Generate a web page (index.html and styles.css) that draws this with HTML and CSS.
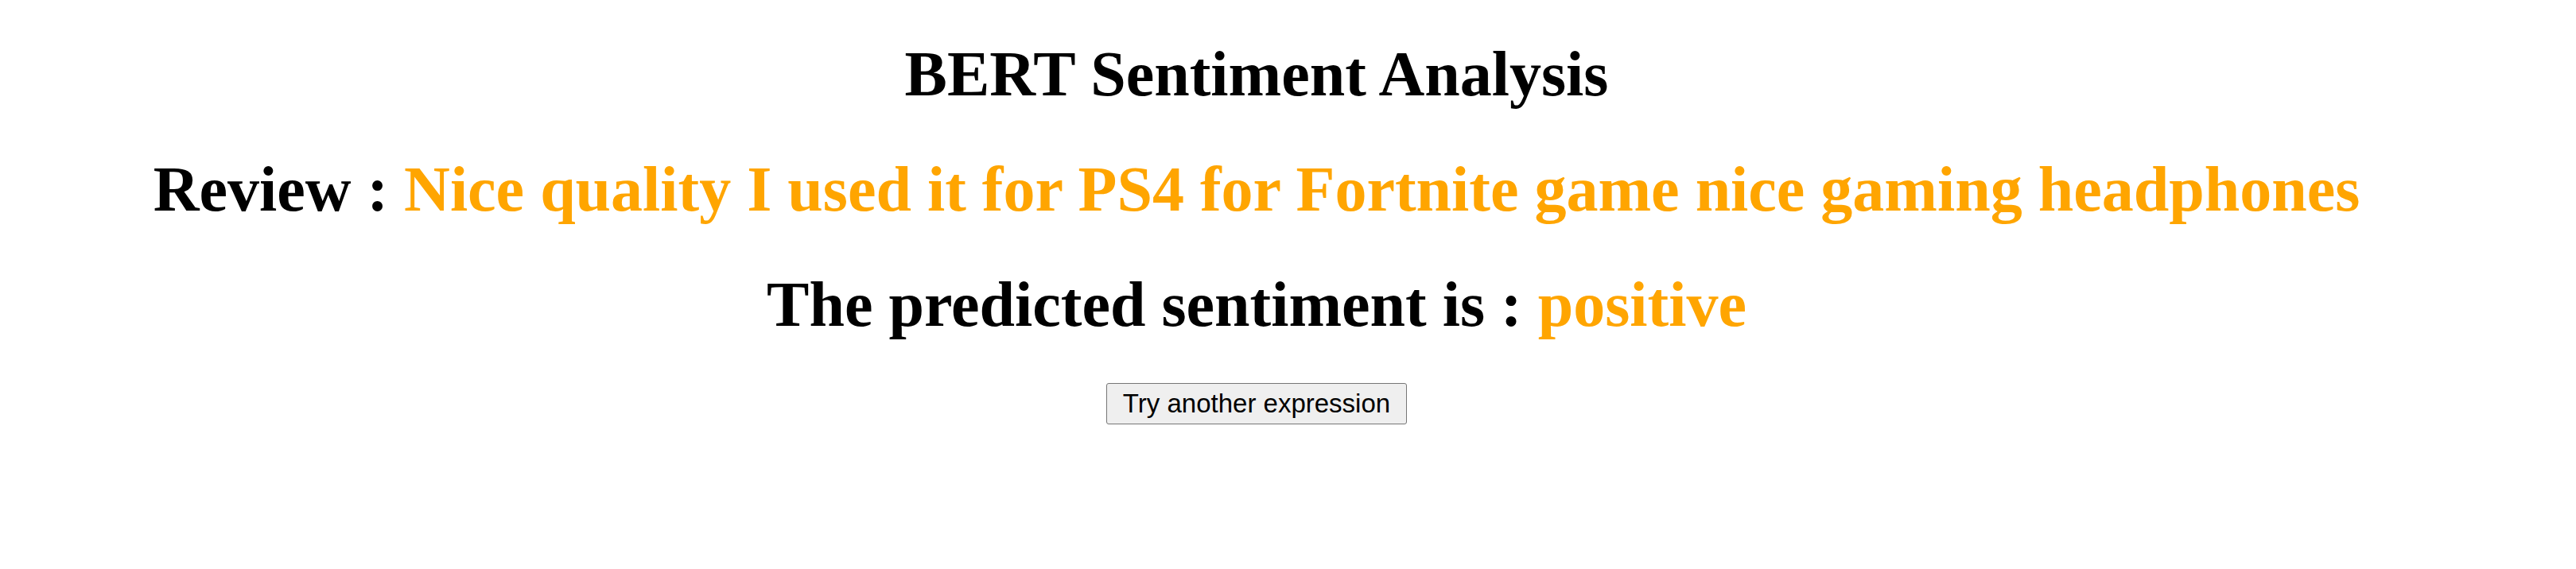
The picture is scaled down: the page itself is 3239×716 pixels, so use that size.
FILE: index.html
```html
<!DOCTYPE html>
<html>
<head>
<meta charset="utf-8">
<title>BERT Sentiment Analysis</title>
<link rel="stylesheet" href="styles.css">
</head>
<body>
<div class="page">
  <h1 class="heading">BERT Sentiment Analysis</h1>
  <h1 class="heading">Review : <span class="value">Nice quality I used it for PS4 for Fortnite game nice gaming headphones</span></h1>
  <h1 class="heading">The predicted sentiment is : <span class="value">positive</span></h1>
  <div class="actions">
    <button class="btn" type="button">Try another expression</button>
  </div>
</div>
</body>
</html>
```
FILE: styles.css
```css
html, body {
  margin: 0;
  padding: 0;
  background: #ffffff;
}
body {
  font-family: "Liberation Serif", "Times New Roman", serif;
  color: #000;
}
.page {
  width: 3160px;
  padding: 0 0 20px 0;
  text-align: center;
}
.heading {
  font-size: 80px;
  font-weight: bold;
  line-height: 92px;
  margin: 0 0 53px 0;
}
.heading:first-child {
  margin-top: 47px;
}
.value {
  color: #ffa500;
}
.actions {
  display: flex;
  justify-content: center;
}
.btn {
  font-family: "Liberation Sans", Arial, sans-serif;
  font-size: 33px;
  line-height: 38px;
  padding: 6px 20px;
  color: #000;
  background: #efefef;
  border: 1px solid #767676;
  border-radius: 3px;
}
```
